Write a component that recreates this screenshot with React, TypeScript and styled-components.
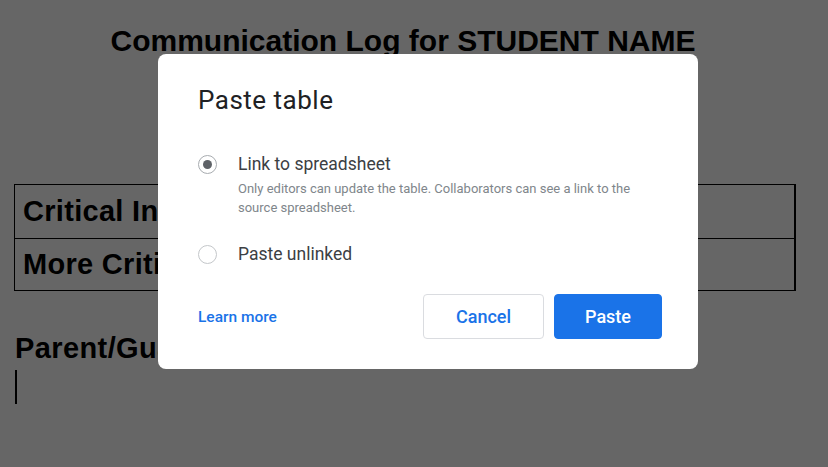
import React from 'react';
import styled, { createGlobalStyle } from 'styled-components';

const GlobalStyle = createGlobalStyle`
  html, body {
    margin: 0;
    padding: 0;
    width: 828px;
    height: 467px;
    overflow: hidden;
    background: #ffffff;
  }
`;

const Doc = styled.div`
  width: 828px;
  height: 467px;
  padding: 24px 0 0 14px;
  box-sizing: border-box;
  font-family: 'Liberation Sans', Arial, sans-serif;
  color: #000;
`;

const DocTitle = styled.h1`
  width: 778px;
  margin: 0;
  font-size: 30px;
  line-height: 34px;
  font-weight: 700;
  text-align: center;
`;

const DocTable = styled.table`
  width: 782px;
  margin-top: 126px;
  border-collapse: collapse;
  border-right: 2px solid #000;
`;

const Cell = styled.td<{ h: number }>`
  height: ${(p) => p.h}px;
  padding: 0 8px;
  border: 1px solid #000;
  font-size: 29px;
  letter-spacing: 0.3px;
  font-weight: 700;
  box-sizing: border-box;
`;

const DocHeading = styled.h2`
  margin: 40px 0 0 1px;
  font-size: 29px;
  letter-spacing: 0.4px;
  line-height: 34px;
  font-weight: 700;
`;

const Caret = styled.div`
  width: 2px;
  height: 34px;
  margin: 5px 0 0 1px;
  background: #000;
`;

const Overlay = styled.div`
  position: fixed;
  inset: 0;
  background: rgba(0, 0, 0, 0.6);
  display: flex;
  align-items: flex-start;
  padding: 54px 0 0 158px;
  box-sizing: border-box;
`;

const Dialog = styled.div`
  width: 540px;
  box-sizing: border-box;
  padding: 30px 36px 30px 40px;
  background: #fff;
  border-radius: 8px;
  font-family: Roboto, 'Liberation Sans', sans-serif;
  color: #202124;
`;

const Title = styled.div`
  font-size: 26px;
  line-height: 32px;
  font-weight: 400;
  letter-spacing: 0.5px;
  color: #202124;
`;

const Options = styled.div`
  margin-top: 36px;
  display: flex;
  flex-direction: column;
  gap: 25px;
`;

const Option = styled.div`
  display: grid;
  grid-template-columns: 40px 1fr;
  align-items: center;
`;

const Radio = styled.span<{ checked?: boolean }>`
  width: 19px;
  height: 19px;
  border-radius: 50%;
  border: 1px solid ${(p) => (p.checked ? '#a8acb0' : '#c4c7ca')};
  box-sizing: border-box;
  display: flex;
  align-items: center;
  justify-content: center;

  &::after {
    content: '';
    width: 9px;
    height: 9px;
    border-radius: 50%;
    background: ${(p) => (p.checked ? '#5f6368' : 'transparent')};
  }
`;

const Label = styled.span`
  font-size: 17.5px;
  line-height: 24px;
  color: #3c4043;
`;

const Description = styled.div`
  grid-column: 2;
  max-width: 402px;
  margin-top: 3px;
  font-size: 13px;
  line-height: 19px;
  color: #80868b;
`;

const Footer = styled.div`
  margin-top: 28px;
  display: flex;
  align-items: center;
  justify-content: space-between;
`;

const LearnMore = styled.a`
  font-size: 15.5px;
  font-weight: 500;
  color: #1a73e8;
  text-decoration: none;
`;

const Actions = styled.div`
  display: flex;
  gap: 10px;
`;

const Button = styled.button<{ primary?: boolean }>`
  height: 45px;
  width: ${(p) => (p.primary ? '108px' : '121px')};
  border-radius: 4px;
  border: 1px solid ${(p) => (p.primary ? '#1a73e8' : '#dadce0')};
  background: ${(p) => (p.primary ? '#1a73e8' : '#fff')};
  color: ${(p) => (p.primary ? '#fff' : '#1a73e8')};
  font-family: Roboto, 'Liberation Sans', sans-serif;
  font-size: 18px;
  font-weight: 500;
  cursor: pointer;
`;

function App() {
  return (
    <>
      <GlobalStyle />
      <Doc>
        <DocTitle>Communication Log for STUDENT NAME</DocTitle>
        <DocTable>
          <tbody>
            <tr>
              <Cell h={54}>Critical Information</Cell>
            </tr>
            <tr>
              <Cell h={52}>More Critical Information</Cell>
            </tr>
          </tbody>
        </DocTable>
        <DocHeading>Parent/Guardian Contact</DocHeading>
        <Caret />
      </Doc>
      <Overlay>
        <Dialog role="dialog">
          <Title>Paste table</Title>
          <Options>
            <Option>
              <Radio checked />
              <Label>Link to spreadsheet</Label>
              <Description>
                Only editors can update the table. Collaborators can see a link to the
                source spreadsheet.
              </Description>
            </Option>
            <Option>
              <Radio />
              <Label>Paste unlinked</Label>
            </Option>
          </Options>
          <Footer>
            <LearnMore href="#">Learn more</LearnMore>
            <Actions>
              <Button>Cancel</Button>
              <Button primary>Paste</Button>
            </Actions>
          </Footer>
        </Dialog>
      </Overlay>
    </>
  );
}

export default App;
